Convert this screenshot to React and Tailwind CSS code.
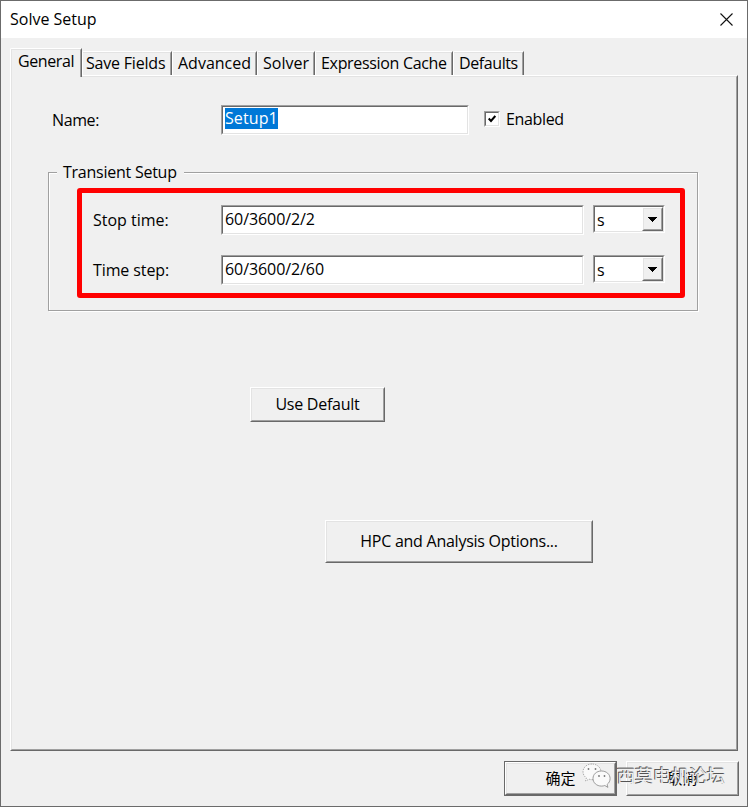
import React, { useState } from "react";

const TABS = [
  { label: "Save Fields", width: "w-[90px]", pad: "pl-[3px] tracking-[-0.2px]" },
  { label: "Advanced", width: "w-[85px]", pad: "pl-[5px] tracking-normal" },
  { label: "Solver", width: "w-[58px]", pad: "pl-[5px] tracking-normal" },
  { label: "Expression Cache", width: "w-[138px]", pad: "pl-[5px] tracking-[-0.32px]" },
  { label: "Defaults", width: "w-[71px]", pad: "pl-[5px] tracking-[-0.4px]" },
];

const sunken =
  "border border-t-[#a0a0a0] border-l-[#a0a0a0] border-r-white border-b-white";
const sunkenInner =
  "border border-t-[#696969] border-l-[#696969] border-r-[#e3e3e3] border-b-[#e3e3e3] bg-white";
const raised =
  "border border-t-white border-l-white border-r-[#696969] border-b-[#696969]";
const raisedInner =
  "border border-t-[#e3e3e3] border-l-[#e3e3e3] border-r-[#a0a0a0] border-b-[#a0a0a0] bg-[#f0f0f0]";

const TextField = ({ width, children }) => (
  <div className={`${sunken} ${width} h-[30px] shrink-0`}>
    <div className={`${sunkenInner} flex h-full items-start pl-[2px] pt-px leading-[22px] tracking-[-0.08px]`}>
      {children}
    </div>
  </div>
);

const UnitSelect = ({ value }) => (
  <div className={`${sunken} ml-[9px] h-[28px] w-[72px] shrink-0`}>
    <div className={`${sunkenInner} flex h-full`}>
      <span className="flex-1 pl-[2px] pt-[2px] leading-[22px]">{value}</span>
      <button className={`${raised} h-full w-[21px]`}>
        <span className={`${raisedInner} flex h-full items-center justify-center pr-px`}>
          <svg width="9" height="5" viewBox="0 0 9 5" shapeRendering="crispEdges">
            <path d="M0 0h9v1H8v1H7v1H6v1H5v1H4V4H3V3H2V2H1V1H0z" />
          </svg>
        </span>
      </button>
    </div>
  </div>
);

const Button = ({ size, children }) => (
  <button className={`${raised} ${size} shrink-0`}>
    <span className={`${raisedInner} flex h-full items-center justify-center pb-[2px]`}>
      {children}
    </span>
  </button>
);

const WeChatMark = () => (
  <svg width="30" height="26" viewBox="0 0 30 26">
    <path
      d="M10 1C4.500 1 1 4.700 1 8.800c0 2.600 1.300 4.600 3.400 6.100L3.600 18l3.500-1.800c1.500.5 3 .6 4.700.4C16.500 16 19 13 19 9 19 4.500 15 1 10 1z"
      fill="#fafafa" stroke="#999" strokeWidth=".8" strokeDasharray="1.500 1"
    />
    <path
      d="M19.500 8c-5 0-8.500 3.300-8.500 7.500s3.600 7.600 8.500 7.600c1.200 0 2.300-.2 3.300-.6l3.100 1.900-.8-2.900c1.800-1.500 3-3.500 3-5.900C28.100 11.300 24.400 8 19.500 8z"
      fill="#fafafa" stroke="#858585" strokeWidth=".8"
    />
    <g fill="#777">
      <circle cx="6.500" cy="6" r=".9" />
      <circle cx="13.500" cy="6" r=".9" />
      <circle cx="17" cy="13" r=".9" />
      <circle cx="22.500" cy="13" r=".9" />
    </g>
  </svg>
);

const App = () => {
  const [enabled, setEnabled] = useState(true);

  return (
    <div className="relative flex h-[807px] w-[748px] flex-col overflow-hidden border border-[#6b6b6b] bg-[#f0f0f0] font-['Open_Sans','Noto_Sans_CJK_SC',sans-serif] text-[16px] leading-[24px] tracking-[-0.25px] text-black">
      <header className="flex h-[37px] shrink-0 items-center justify-between bg-white pl-[9px] pr-[14px]">
        <span className="pb-px tracking-normal">Solve Setup</span>
        <svg width="13" height="13" viewBox="0 0 13 13">
          <path d="M.5.5l12 12M12.500.5l-12 12" stroke="#111" strokeWidth="1.100" />
        </svg>
      </header>

      <nav className="relative z-10 flex h-[37px] shrink-0 items-end pl-[9px]">
        <div className="-mb-[2px] h-[29px] w-[72px] rounded-tl-[2px] border-l border-r border-t border-l-white border-r-[#696969] border-t-white bg-[#f0f0f0]">
          <div className="h-full border-l border-r border-t border-l-[#e3e3e3] border-r-[#a0a0a0] border-t-[#e3e3e3] pl-[6px] leading-[22px] tracking-[-0.4px]">
            General
          </div>
        </div>
        {TABS.map((tab) => (
          <div
            key={tab.label}
            className={`${tab.width} h-[24px] whitespace-nowrap rounded-tl-[2px] border-l border-r border-t border-l-white border-r-[#696969] border-t-white`}
          >
            <div className={`${tab.pad} h-full border-r border-t border-r-[#a0a0a0] border-t-[#e3e3e3] leading-[20px]`}>
              {tab.label}
            </div>
          </div>
        ))}
      </nav>

      <main className={`${raised} ml-[9px] h-[676px] w-[728px] shrink-0`}>
        <div className={`${raisedInner} h-full`}>
          <div className="flex h-[30px] mt-[28px] pl-[40px]">
            <span className="w-[169px] pt-[3px] tracking-[-0.4px]">Name:</span>
            <TextField width="w-[248px]">
              <span className="h-[21px] bg-[#0078d7] leading-[20px] tracking-[0.1px] text-white">Setup1</span>
            </TextField>
            <label className="ml-[15px] flex pt-[2px]">
              <span
                className={`${sunken} mt-[4px] h-[16px] w-[16px]`}
                onClick={() => setEnabled(!enabled)}
              >
                <span className={`${sunkenInner} flex h-full items-center justify-center`}>
                  {enabled && (
                    <svg width="8" height="8" viewBox="0 0 8 8">
                      <path d="M.7 3.500l2.300 2.500 4.300-5" fill="none" stroke="#000" strokeWidth="2" />
                    </svg>
                  )}
                </span>
              </span>
              <span className="ml-[6px] tracking-[-0.35px]">Enabled</span>
            </label>
          </div>

          <section className="relative mx-[36px] mt-[37px] h-[139px] w-[650px]">
            <div className="flex h-full flex-col border border-[#a0a0a0] shadow-[1px_1px_0_#fff,inset_1px_1px_0_#fff]">
              <h2 className="-mt-[13px] ml-[8px] w-[127px] bg-[#f0f0f0] pl-[6px]">
                Transient Setup
              </h2>
              <div className="mt-[21px] flex h-[50px] pl-[44px]">
                <span className="w-[128px] pt-[3px] tracking-normal">Stop time:</span>
                <TextField width="w-[363px]">60/3600/2/2</TextField>
                <UnitSelect value="s" />
              </div>
              <div className="flex h-[50px] pl-[44px]">
                <span className="w-[128px] pt-[3px] tracking-[-0.1px]">Time step:</span>
                <TextField width="w-[363px]">60/3600/2/60</TextField>
                <UnitSelect value="s" />
              </div>
            </div>
            {/* highlight around the time fields */}
            <div className="pointer-events-none absolute left-[29px] top-[16px] h-[110px] w-[608px] rounded-[3px] border-[5px] border-[#ff0000]" />
          </section>

          <div className="mt-[76px] pl-[238px]">
            <Button size="block h-[35px] w-[135px]">Use Default</Button>
          </div>
          <div className="mt-[98px] pl-[313px]">
            <Button size="block h-[43px] w-[268px]">HPC and Analysis Options...</Button>
          </div>
        </div>
      </main>

      <footer className="mt-[10px] flex gap-[9px] pl-[503px] text-[15px] tracking-normal">
        <div className="h-[35px] w-[113px] border border-[#696969]">
          <Button size="block h-full w-full">确定</Button>
        </div>
        <Button size="h-[35px] w-[113px]">取消</Button>
      </footer>

      {/* account watermark over the footer buttons */}
      <div className="pointer-events-none absolute left-[581px] top-[762px] flex items-center">
        <WeChatMark />
        <span className="ml-[5px] whitespace-nowrap text-[18px] leading-[26px] tracking-normal text-[#f0f0f0] [text-shadow:-1px_-1px_0_#555,0_-1px_0_#777]">
          西莫电机论坛
        </span>
      </div>
    </div>
  );
};

export default App;
